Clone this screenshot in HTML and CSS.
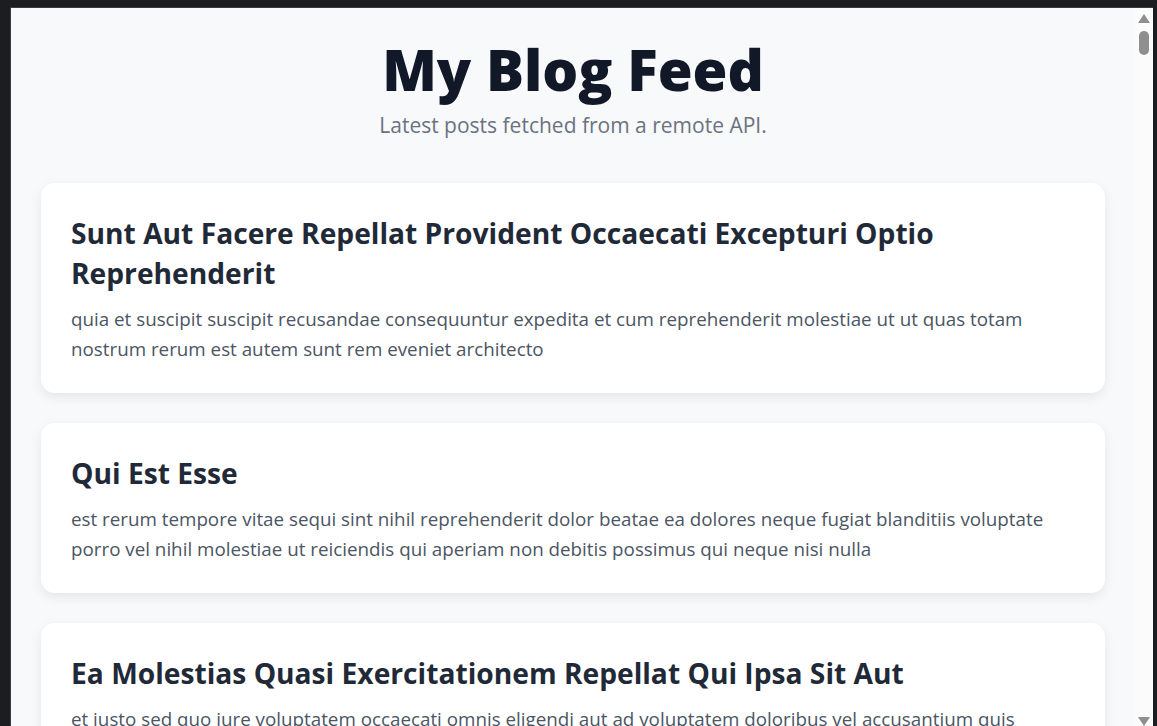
FILE: index.html
```html
<!DOCTYPE html>
<html lang="en">
<head>
<meta charset="utf-8">
<title>My Blog Feed</title>
<link rel="stylesheet" href="styles.css">
</head>
<body>
<div class="window">
  <main class="feed">
    <header class="feed-header">
      <h1 class="feed-title">My Blog Feed</h1>
      <p class="feed-subtitle">Latest posts fetched from a remote API.</p>
    </header>
    <section class="posts">
      <article class="post">
        <h2 class="post-title">Sunt Aut Facere Repellat Provident Occaecati Excepturi Optio Reprehenderit</h2>
        <p class="post-body">quia et suscipit suscipit recusandae consequuntur expedita et cum reprehenderit molestiae ut ut quas totam nostrum rerum est autem sunt rem eveniet architecto</p>
      </article>
      <article class="post">
        <h2 class="post-title">Qui Est Esse</h2>
        <p class="post-body">est rerum tempore vitae sequi sint nihil reprehenderit dolor beatae ea dolores neque fugiat blanditiis voluptate porro vel nihil molestiae ut reiciendis qui aperiam non debitis possimus qui neque nisi nulla</p>
      </article>
      <article class="post">
        <h2 class="post-title">Ea Molestias Quasi Exercitationem Repellat Qui Ipsa Sit Aut</h2>
        <p class="post-body">et iusto sed quo iure voluptatem occaecati omnis eligendi aut ad voluptatem doloribus vel accusantium quis pariatur molestiae porro eius odio et labore et velit aut</p>
      </article>
      <article class="post">
        <h2 class="post-title">Eum Et Est Occaecati</h2>
        <p class="post-body">ullam et saepe reiciendis voluptatem adipisci sit amet autem assumenda provident rerum culpa quis hic commodi nesciunt rem tenetur doloremque ipsam iure quis sunt voluptatem rerum illo velit</p>
      </article>
    </section>
  </main>
  <div class="scrollbar" aria-hidden="true">
    <svg class="scroll-arrow" width="12" height="9" viewBox="0 0 12 9"><path d="M6 0 L12 9 L0 9 Z" fill="#8f8f8f"/></svg>
    <div class="scroll-thumb"></div>
    <div class="scroll-space"></div>
    <svg class="scroll-arrow" width="12" height="9" viewBox="0 0 12 9"><path d="M0 0 L12 0 L6 9 Z" fill="#8f8f8f"/></svg>
  </div>
</div>
</body>
</html>
```
FILE: styles.css
```css
* { box-sizing: border-box; }

html, body {
  height: 100%;
}

body {
  margin: 0;
  background: #1c1d20;
  padding: 7px 4px 0 10px;
  display: flex;
  overflow: hidden;
  font-family: "Open Sans", "Noto Sans", sans-serif;
}

.window {
  flex: 1;
  display: flex;
  min-height: 0;
  background: #f8f9fa;
  border-top: 1px solid #3a3b3f;
  border-left: 1px solid #3a3b3f;
}

.feed {
  flex: 1;
  min-width: 0;
  overflow: hidden;
  padding: 30px 30px 0;
}

.feed-header {
  text-align: center;
  margin-bottom: 44px;
}

.feed-title {
  margin: 0 0 9px;
  font-size: 56.5px;
  line-height: 64px;
  font-weight: 800;
  color: #111827;
  letter-spacing: 0;
}

.feed-subtitle {
  margin: 0;
  font-size: 21px;
  line-height: 28px;
  color: #6b7280;
}

.posts {
  display: flex;
  flex-direction: column;
  gap: 30px;
}

.post {
  background: #ffffff;
  border-radius: 14px;
  padding: 30px 30px 29px;
  box-shadow: 0 4px 12px rgba(0, 0, 0, 0.08);
}

.post-title {
  margin: 0 0 11px;
  font-size: 28.2px;
  line-height: 40px;
  font-weight: 700;
  color: #1f2937;
}

.post-body {
  margin: 0;
  font-size: 18.8px;
  line-height: 30px;
  color: #4b5563;
}

.scrollbar {
  width: 18px;
  flex: none;
  display: flex;
  flex-direction: column;
  align-items: center;
  background: #fbfbfc;
  padding: 6px 0 0;
}

.scroll-arrow {
  display: block;
  flex: none;
}

.scroll-thumb {
  margin-top: 8px;
  width: 10px;
  height: 24px;
  border-radius: 5px;
  background: #8f8f8f;
  flex: none;
}

.scroll-space {
  flex: 1;
}
```
